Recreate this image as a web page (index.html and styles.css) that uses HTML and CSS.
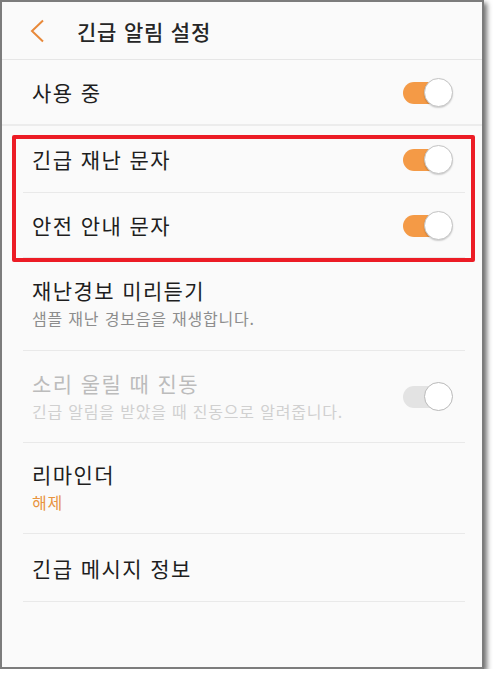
FILE: index.html
```html
<!DOCTYPE html>
<html lang="ko">
<head>
<meta charset="utf-8">
<title>긴급 알림 설정</title>
<link rel="stylesheet" href="styles.css">
</head>
<body>
<div class="screen">
  <header class="appbar">
    <svg class="back" width="16" height="24" viewBox="0 0 16 24" aria-hidden="true">
      <path d="M14 1.5 L3 12 L14 22.5" fill="none" stroke="#e8893a" stroke-width="2"/>
    </svg>
    <h1 class="title">긴급 알림 설정</h1>
  </header>

  <div class="row master">
    <span class="label">사용 중</span>
    <span class="switch on"><span class="track"></span><span class="thumb"></span></span>
  </div>

  <div class="list">
    <div class="row item r-b">
      <span class="label">긴급 재난 문자</span>
      <span class="switch on"><span class="track"></span><span class="thumb"></span></span>
    </div>
    <div class="row item r-c">
      <span class="label">안전 안내 문자</span>
      <span class="switch on"><span class="track"></span><span class="thumb"></span></span>
    </div>
    <div class="row item double r-d">
      <div class="texts">
        <span class="label">재난경보 미리듣기</span>
        <span class="sub">샘플 재난 경보음을 재생합니다.</span>
      </div>
    </div>
    <div class="row item double disabled r-e">
      <div class="texts">
        <span class="label">소리 울릴 때 진동</span>
        <span class="sub">긴급 알림을 받았을 때 진동으로 알려줍니다.</span>
      </div>
      <span class="switch off"><span class="track"></span><span class="thumb"></span></span>
    </div>
    <div class="row item double r-f">
      <div class="texts">
        <span class="label">리마인더</span>
        <span class="sub accent">해제</span>
      </div>
    </div>
    <div class="row item r-g">
      <span class="label">긴급 메시지 정보</span>
    </div>
  </div>

  <div class="highlight"></div>
</div>
</body>
</html>
```

FILE: styles.css
```css
html, body {
  margin: 0;
  padding: 0;
  background: #ffffff;
}

body {
  font-family: "Noto Sans CJK KR", "Noto Sans", "Liberation Sans", sans-serif;
  color: #1e1e1e;
}

.screen {
  position: relative;
  width: 480px;
  height: 665px;
  background: #fafafa;
  border: 2px solid #7c7c7c;
  box-shadow: 3px 3px 5px rgba(0, 0, 0, 0.55);
  overflow: hidden;
}

.appbar {
  height: 57px;
  display: flex;
  align-items: center;
  border-bottom: 1px solid #e6e6e6;
}

.back {
  margin-left: 27px;
  flex: none;
}

.title {
  margin: 0 0 0 32px;
  font-size: 21px;
  font-weight: 500;
  color: #262626;
  letter-spacing: 0.8px;
}

.row {
  display: flex;
  align-items: center;
  justify-content: space-between;
  box-sizing: border-box;
}

.master {
  height: 66px;
  padding: 0 29px 0 30px;
  border-bottom: 2px solid #ececec;
}

.list {
  display: flex;
  flex-direction: column;
  padding: 0 17px 0 21px;
}

.item {
  border-bottom: 1px solid #e9e9e9;
  padding: 0 12px 0 9px;
}

.r-b { height: 67px; }
.r-c { height: 65px; }
.r-d { height: 93px; }
.r-e { height: 92px; }
.r-f { height: 91px; }
.r-g { height: 68px; }

.label {
  font-size: 21px;
  letter-spacing: 1.4px;
  line-height: 28px;
}

.texts {
  display: flex;
  flex-direction: column;
}

.sub {
  font-size: 16px;
  color: #8d8d8d;
  letter-spacing: 0.8px;
  line-height: 28px;
}

.sub.accent {
  color: #e8943f;
}

.disabled .label { color: #bcbcbc; }
.disabled .sub { color: #d0d0d0; }

.switch {
  position: relative;
  width: 50px;
  height: 29px;
  flex: none;
}

.switch .track {
  position: absolute;
  left: 0;
  top: 4px;
  width: 46px;
  height: 22px;
  border-radius: 11px;
  background: #f49a46;
}

.switch .thumb {
  position: absolute;
  right: 0;
  top: 0;
  width: 27px;
  height: 27px;
  border-radius: 50%;
  background: #ffffff;
  border: 1px solid #c4c4c4;
  box-shadow: 0 1px 1.5px rgba(0, 0, 0, 0.18);
}

.switch.off .track {
  background: #e3e3e3;
}

.switch.off .thumb {
  border-color: #b9b9b9;
  box-shadow: none;
}

.highlight {
  position: absolute;
  left: 10px;
  top: 133px;
  width: 455px;
  height: 119px;
  border: 4px solid #ec1c25;
  border-radius: 2px;
}
```
